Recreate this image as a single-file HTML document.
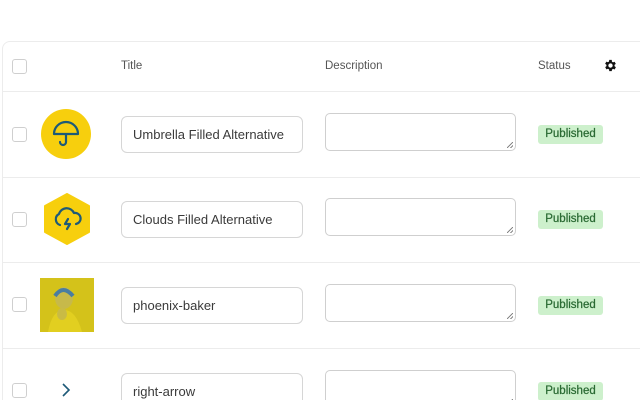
<!DOCTYPE html>
<html><head><style>
*{box-sizing:border-box;margin:0;padding:0}
html,body{width:640px;height:400px;overflow:hidden}
body{background:#fff;font-family:"Liberation Sans",sans-serif;position:relative}
.tbl{position:absolute;left:2px;top:41px;width:646px;height:400px;border:1px solid #ececec;border-radius:8px}
.hr{position:absolute;left:3px;width:640px;height:1px;background:#ececec}
.cb{position:absolute;left:12px;width:15px;height:15px;border:1.5px solid #cfcfcf;border-radius:3px;background:#fff}
.th{position:absolute;top:60px;font-size:11.5px;color:#555}
.inp{position:absolute;left:121px;width:182px;height:37px;border:1px solid #d6d6d6;border-radius:6px;font-size:13px;color:#3a3a3a;padding:10px 11px;line-height:16px}
.ta{position:absolute;left:325px;width:191px;height:38px;border:1px solid #cfcfcf;border-radius:5px}
.ta:after{content:"";position:absolute;right:2px;bottom:2px;width:6px;height:6px;background:linear-gradient(135deg,transparent 45%,#888 45%,#888 55%,transparent 55%,transparent 75%,#888 75%,#888 85%,transparent 85%)}
.badge{position:absolute;left:538px;width:65px;height:19px;background:#cdf0cc;color:#2a6a33;font-size:11.5px;text-align:center;line-height:19px;border-radius:3px;-webkit-text-stroke:0.25px #2a6a33}
</style></head><body>
<div class="tbl"></div>
<div class="hr" style="top:91px"></div>
<div class="hr" style="top:177px"></div>
<div class="hr" style="top:262px"></div>
<div class="hr" style="top:348px"></div>
<div class="cb" style="top:59px"></div>
<div class="th" style="left:121px">Title</div>
<div class="th" style="left:325px">Description</div>
<div class="th" style="left:538px">Status</div>
<svg style="position:absolute;left:603px;top:58px" width="15" height="15" viewBox="0 0 24 24"><path fill="#111" d="M19.4 13a7.5 7.5 0 000-2l2.1-1.6-2-3.5-2.5 1a7 7 0 00-1.7-1L15 3h-4l-.4 2.7a7 7 0 00-1.7 1l-2.5-1-2 3.5L6.6 11a7.5 7.5 0 000 2l-2.1 1.6 2 3.5 2.5-1a7 7 0 001.7 1L11 21h4l.4-2.7a7 7 0 001.7-1l2.5 1 2-3.5zM13 15.5a3.5 3.5 0 110-7 3.5 3.5 0 010 7z" transform="translate(-1 0)"/></svg>

<div class="cb" style="top:127px"></div>
<svg style="position:absolute;left:40px;top:108px" width="52" height="52" viewBox="0 0 52 52"><circle cx="26" cy="26" r="25" fill="#f7cf0d"/><path d="M14 26a12 12 0 0124 0z M26 26v8a3 3 0 01-6 0" fill="none" stroke="#1d5a78" stroke-width="2.2" stroke-linejoin="round" stroke-linecap="round"/></svg>
<div class="inp" style="top:116px">Umbrella Filled Alternative</div>
<div class="ta" style="top:113px"></div>
<div class="badge" style="top:125px">Published</div>

<div class="cb" style="top:212px"></div>
<svg style="position:absolute;left:42px;top:193px" width="50" height="52" viewBox="0 0 50 52"><polygon points="25,1 47,13 47,39 25,51 3,39 3,13" fill="#f7cf0d" stroke="#f7cf0d" stroke-width="2" stroke-linejoin="round"/><path d="M18 32a6 6 0 01-1-11 8 8 0 0115-1 5.5 5.5 0 012 11M26 26l-3 5h5l-3 5" fill="none" stroke="#1d5a78" stroke-width="2.2" stroke-linecap="round" stroke-linejoin="round"/></svg>
<div class="inp" style="top:201px">Clouds Filled Alternative</div>
<div class="ta" style="top:198px"></div>
<div class="badge" style="top:210px">Published</div>

<div class="cb" style="top:297px"></div>
<svg style="position:absolute;left:40px;top:278px" width="54" height="54" viewBox="0 0 54 54"><rect width="54" height="54" fill="#d4c21a"/><ellipse cx="24" cy="20" rx="9" ry="11" fill="#c7b94a"/><path d="M15 18q8-12 18 0" stroke="#4a7da0" stroke-width="4" fill="none"/><path d="M8 54q4-22 16-22t18 22z" fill="#e2cf20"/><ellipse cx="22" cy="36" rx="5" ry="6" fill="#c9bb45"/></svg>
<div class="inp" style="top:287px">phoenix-baker</div>
<div class="ta" style="top:284px"></div>
<div class="badge" style="top:296px">Published</div>

<div class="cb" style="top:383px"></div>
<svg style="position:absolute;left:61px;top:383px" width="10" height="14" viewBox="0 0 10 14"><path d="M2 1l6 6-6 6" fill="none" stroke="#1d5a78" stroke-width="1.6"/></svg>
<div class="inp" style="top:373px">right-arrow</div>
<div class="ta" style="top:370px"></div>
<div class="badge" style="top:382px">Published</div>
</body></html>
